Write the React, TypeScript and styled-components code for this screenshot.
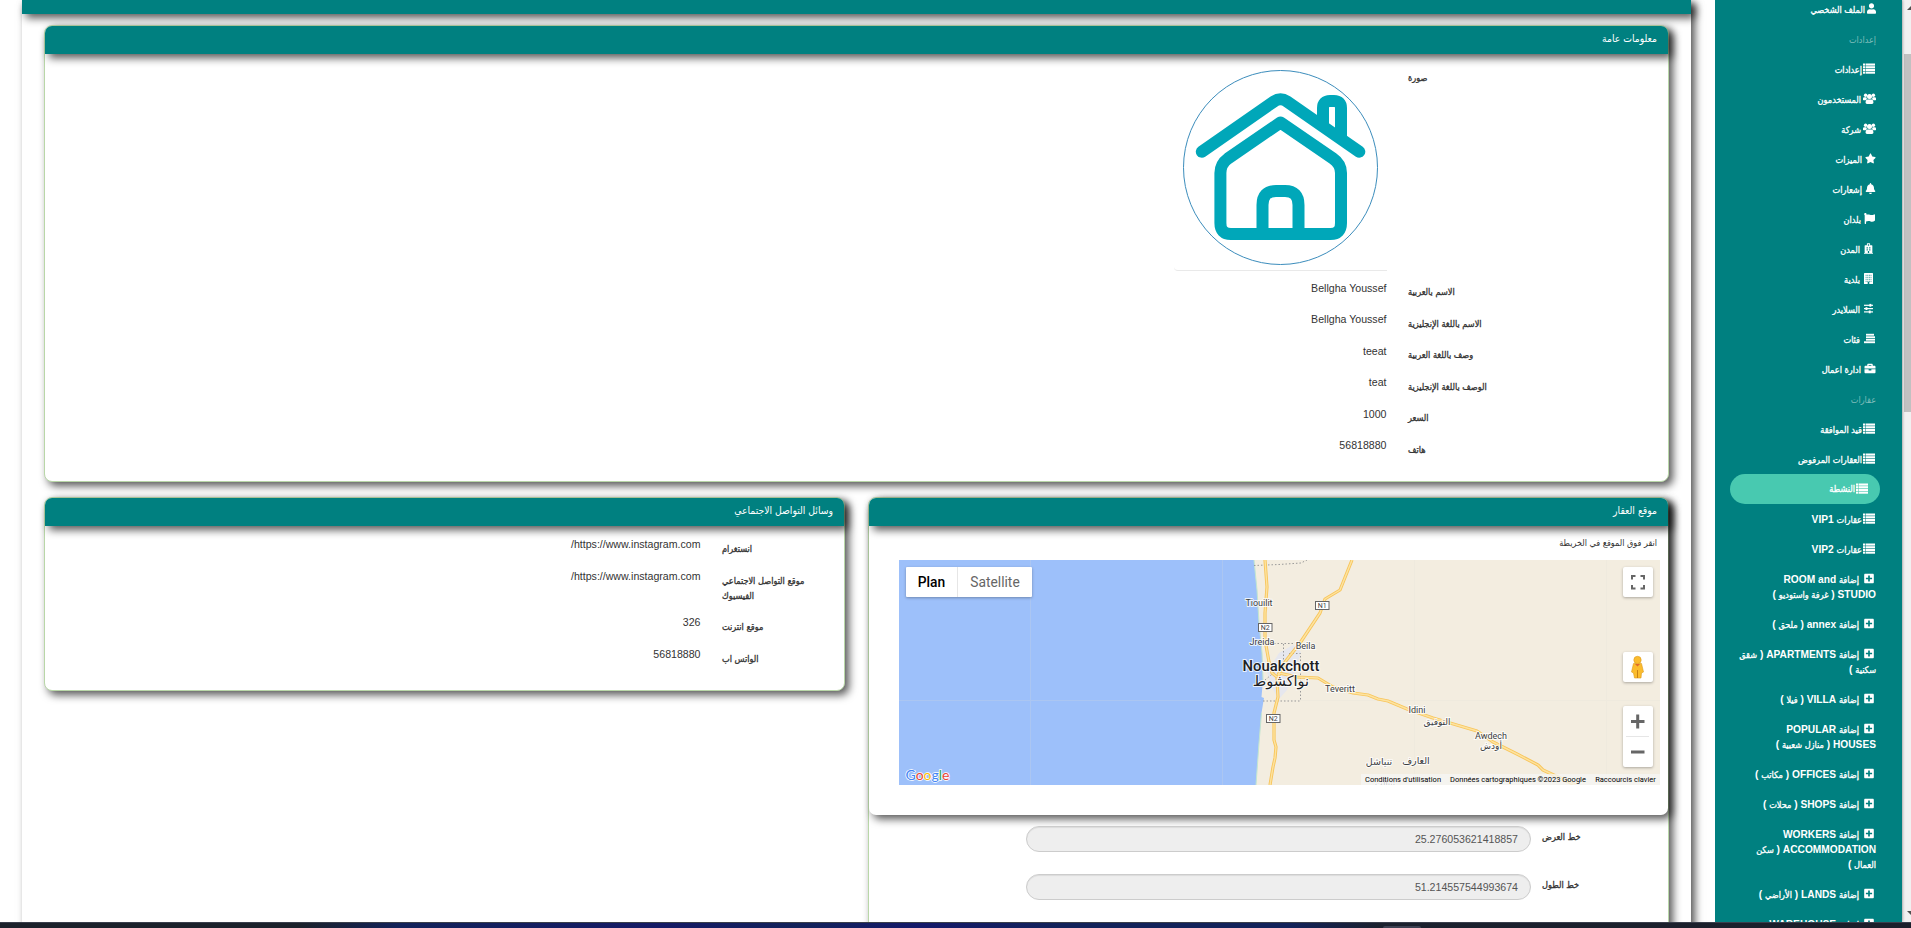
import React from "react";
import styled, { createGlobalStyle } from "styled-components";
import {
  FaUser, FaStar, FaBell, FaFlag, FaHospital, FaBriefcase, FaPlusSquare,
} from "react-icons/fa";

const Global = createGlobalStyle`
  * { box-sizing: border-box; }
  html, body { margin: 0; padding: 0; overflow: hidden; background: #fff; }
  body { font-family: "Liberation Sans", "DejaVu Sans", sans-serif; font-size: 10.6px; line-height: 15px; color: #333; }
`;

const shadow = "4px 4px 8px rgba(0,0,0,0.66)";

const Screen = styled.div`
  width: 1911px; height: 928px; overflow: hidden;
  display: flex; flex-direction: column;
`;
const Page = styled.div`
  height: 922px; display: flex; direction: rtl; overflow: hidden;
`;
const Scrollbar = styled.div`
  width: 9px; flex: none; background: #f1f1f1; padding: 6px 0 7px 0; direction: ltr;
  display: flex; flex-direction: column; align-items: flex-end;
`;
const Thumb = styled.div`
  width: 7px; height: 358px; background: #c1c1c1; margin: 44px 0 auto;
`;
const Arrow = styled.svg`
  width: 4px; height: 4px; flex: none;
`;
const Sidebar = styled.nav`
  width: 187px; flex: none; background: #008080; overflow: hidden;
  box-shadow: 0 0 3px rgba(0,0,0,0.5);
`;
const Menu = styled.ul`
  list-style: none; margin: -6px 0 0; padding: 0; font-weight: bold; font-size: 10.2px; color: #fff;
`;
/* Arabic runs: narrow face, with a thin outline where a heavier weight is wanted */
const Ar = styled.span<{ $s?: number; $bold?: boolean }>`
  font-family: "DejaVu Sans Condensed", "DejaVu Sans", sans-serif; font-stretch: condensed;
  font-weight: 400; font-size: ${(p) => p.$s ?? 9}px;
  -webkit-text-stroke: ${(p) => (p.$bold ? 0.3 : 0)}px currentColor;
`;
const MenuItem = styled.li<{ $active?: boolean; $icon?: number }>`
  padding: ${(p) => (p.$active ? "7px 12px 8px 0" : "7.5px 0")};
  margin: ${(p) => (p.$active ? "0 22px 0 15px" : "0 26px 0 0")};
  background: ${(p) => (p.$active ? "#48c9b0" : "transparent")};
  border-radius: 15px; white-space: nowrap;
  svg { width: ${(p) => p.$icon ?? 11}px; height: 11px; vertical-align: -1.5px; }
`;
const MenuLine = styled.div`
  height: 15px; line-height: 15px;
`;
const MenuHeading = styled.li`
  padding: 7.5px 26px 7.5px 0; color: #7fbdbb; height: 30px;
`;
const IconGap = styled.span<{ $before: number; $after: number }>`
  margin-right: ${(p) => p.$before}px; margin-left: ${(p) => p.$after}px;
`;

const Main = styled.main`
  flex: 1; min-width: 0; padding: 0 24px 0 22px; background: #fff;
`;
const Outer = styled.section`
  height: 1100px; background: #fff; box-shadow: ${shadow};
`;
const OuterBar = styled.div`
  height: 14px; background: #008080; box-shadow: ${shadow};
`;
const OuterBody = styled.div`
  padding: 11px 22px 0; display: flex; flex-direction: column; gap: 15px;
`;
const Panel = styled.section<{ $h: number }>`
  height: ${(p) => p.$h}px; border: 1px solid #b9d7a8; border-radius: 8px;
  background: #fff; box-shadow: ${shadow};
`;
const PanelTitle = styled.header`
  height: 28px; background: #008080; color: #fff; border-radius: 7px 7px 0 0;
  padding: 5px 11px; line-height: 15px; box-shadow: ${shadow};
`;
const Columns = styled.div`
  display: grid; grid-template-columns: 801px 801px; gap: 23px; align-items: start;
`;
const Rows = styled.dl<{ $top: number }>`
  margin: 0; padding: ${(p) => p.$top}px 0 0; display: flex; flex-direction: column;
`;
const Row = styled.div<{ $label: number; $h: number }>`
  display: grid; grid-template-columns: ${(p) => p.$label}px 1fr; column-gap: 21.500px;
  min-height: ${(p) => p.$h}px; align-items: start;
`;
const Label = styled.dt<{ $top?: number }>`
  text-align: left; white-space: nowrap; padding-top: ${(p) => p.$top ?? 4}px;
`;
const LabelLine = styled.div`
  height: 15px;
`;
const Value = styled.dd<{ $top?: number }>`
  margin: 0; text-align: right; padding-top: ${(p) => p.$top ?? 0}px;
`;
const Thumbnail = styled.div`
  width: 213px; height: 206px; padding: 5px 9px; border-bottom: 1px solid #e9e9e9; border-radius: 0 0 0 4px;
  svg { display: block; }
`;
const LocationBox = styled.div`
  height: 317px; border-radius: 7px; box-shadow: ${shadow}; background: #fff;
`;
const Hint = styled.p`
  margin: 0; padding: 9px 11px 0; height: 34px;
`;
const MapFrame = styled.div`
  position: relative; width: 761px; height: 225px; margin-right: 8px; overflow: hidden; direction: ltr;
  font-family: Roboto, sans-serif;
`;
const MapType = styled.div`
  position: absolute; left: 7px; top: 7px; height: 30px; display: flex; background: #fff;
  border-radius: 1px; box-shadow: 0 1px 3px rgba(0,0,0,0.3);
  font-size: 13.800px; line-height: 30px;
`;
const MapTypeButton = styled.span<{ $on?: boolean }>`
  width: ${(p) => (p.$on ? 52 : 74)}px; text-align: center; color: ${(p) => (p.$on ? "#000" : "#666")};
  font-weight: ${(p) => (p.$on ? 500 : 400)}; border-right: ${(p) => (p.$on ? "1px solid #e6e6e6" : "0")};
`;
const MapControl = styled.div<{ $top: number; $h: number }>`
  position: absolute; left: 724px; top: ${(p) => p.$top}px; width: 30px; height: ${(p) => p.$h}px;
  background: #fff; border-radius: 2px; box-shadow: 0 1px 3px rgba(0,0,0,0.3);
  svg { display: block; }
`;
const Attribution = styled.div`
  position: absolute; right: 0; bottom: 0; height: 11px; padding: 0 4px; display: flex; gap: 9px;
  background: rgba(245,245,245,0.75); color: #000; font-size: 7.5px; line-height: 11px; white-space: nowrap;
`;
const Credit = styled.span<{ $w: number }>`
  width: ${(p) => p.$w}px; text-align: center;
`;
const Fields = styled.div`
  padding: 11px 0 0; display: flex; flex-direction: column; gap: 22px;
`;
const Field = styled.div`
  display: grid; grid-template-columns: 126px 505px; column-gap: 11px; height: 26px;
`;
const FieldLabel = styled.label`
  text-align: left; padding-top: 3px;
`;
const Input = styled.div`
  border: 1px solid #ccc; border-radius: 13px; background: #eee; color: #555; height: 26px;
  padding: 0 12px; line-height: 25px; text-align: right; box-shadow: inset 0 1px 1px rgba(0,0,0,0.08);
`;
const Taskbar = styled.div`
  height: 6px; flex: none; direction: ltr; padding-left: 1383px;
  background: linear-gradient(90deg, #1b212b 0, #1b212b 300px, #12225a 400px, #151a66 660px, #12225a 800px, #14196a 920px, #12225a 1060px, #12225a 1290px, #1b212e 1380px, #1b1f2b 100%);
  border-top: 1px solid #3a3f4c;
`;
const TaskHint = styled.div`
  width: 38px; height: 2px; margin-top: 3px; background: #3d4152; border-radius: 2px 2px 0 0;
`;

function ListGlyph() {
  return (
    <svg viewBox="0 0 12 11" fill="currentColor">
      {[0.5, 3.2, 5.9, 8.6].map((y) => (
        <g key={y}><rect x="0" y={y} width="2.4" height="2.1" /><rect x="2.9" y={y} width="9.1" height="2.1" /></g>
      ))}
    </svg>
  );
}
function GroupGlyph() {
  return (
    <svg viewBox="0 0 13 11" fill="currentColor">
      <circle cx="2.6" cy="2.3" r="1.7" /><circle cx="10.4" cy="2.3" r="1.7" />
      <circle cx="6.5" cy="3.6" r="2.5" />
      <path d="M0 7 V5.600 Q0 4.200 1.300 4.200 H3.400 Q3.600 5.600 4.300 6.200 Q3.200 6.300 2.700 7.200 H0.600 Z" />
      <path d="M13 7 V5.600 Q13 4.200 11.700 4.200 H9.600 Q9.400 5.600 8.700 6.200 Q9.800 6.300 10.300 7.200 H12.400 Z" />
      <path d="M2.600 9.600 Q2.600 6.500 4.700 6.500 H8.300 Q10.400 6.500 10.400 9.600 Q10.400 11 9 11 H4 Q2.600 11 2.600 9.600 Z" />
    </svg>
  );
}
function TowerGlyph() {
  return (
    <svg viewBox="0 0 9 11">
      <rect width="9" height="11" rx="0.5" fill="currentColor" />
      <path d="M1.600 2.300 H7.500 M1.600 4.300 H7.500 M1.600 6.300 H7.500 M1.600 8.300 H7.500" stroke="#008080" strokeWidth="0.8" strokeDasharray="1 0.650" />
      <rect x="3.700" y="8.800" width="1.600" height="2.200" fill="#008080" />
    </svg>
  );
}
function SlidersGlyph() {
  return (
    <svg viewBox="0 0 9 11" fill="currentColor">
      <rect x="0" y="1.700" width="9" height="1.200" /><rect x="5.400" y="0.900" width="1.900" height="2.800" />
      <rect x="0" y="5" width="9" height="1.200" /><rect x="1.500" y="4.200" width="1.900" height="2.800" />
      <rect x="0" y="8.300" width="9" height="1.200" /><rect x="4.800" y="7.500" width="1.900" height="2.800" />
    </svg>
  );
}
function CategoryGlyph() {
  return (
    <svg viewBox="0 0 11 11" fill="currentColor">
      <rect x="2" y="0.800" width="8" height="1.800" /><rect x="2" y="3.300" width="9" height="1.800" />
      <rect x="2" y="5.800" width="9" height="1.800" /><rect x="0" y="8.300" width="11" height="1.900" />
    </svg>
  );
}

type Glyph = React.ComponentType;
interface Entry { icon: Glyph; lines: React.ReactNode[]; w?: number; before?: number; after?: number; active?: boolean; heading?: boolean; }

const B = ({ children }: { children: React.ReactNode }) => <Ar $bold $s={9.1}>{children}</Ar>;

const add = (first: React.ReactNode, ...rest: React.ReactNode[]): Entry => ({
  icon: FaPlusSquare, w: 10, before: 2, after: 5, lines: [<><B>إضافة</B> {first}</>, ...rest],
});
const list = (label: React.ReactNode, active?: boolean): Entry => ({
  icon: ListGlyph, w: 12, before: active ? 0 : 1, after: 1, active, lines: [label],
});

const entries: Entry[] = [
  { icon: FaUser, w: 9, before: 0, after: 2, lines: [<B>الملف الشخصي</B>] },
  { icon: FaUser, heading: true, lines: [<Ar>إعدادات</Ar>] },
  list(<B>إعدادات</B>),
  { icon: GroupGlyph, w: 13, before: 0, after: 2, lines: [<B>المستخدمون</B>] },
  { icon: GroupGlyph, w: 13, before: 0, after: 2, lines: [<B>شركة</B>] },
  { icon: FaStar, before: 0, after: 3, lines: [<B>الميزات</B>] },
  { icon: FaBell, before: 0, after: 3, lines: [<B>إشعارات</B>] },
  { icon: FaFlag, before: 1, after: 3, lines: [<B>بلدان</B>] },
  { icon: FaHospital, w: 9, before: 3, after: 4, lines: [<B>المدن</B>] },
  { icon: TowerGlyph, w: 9, before: 3, after: 4, lines: [<B>بلدية</B>] },
  { icon: SlidersGlyph, w: 9, before: 3, after: 4, lines: [<B>السلايدر</B>] },
  { icon: CategoryGlyph, before: 1, after: 4, lines: [<B>فئات</B>] },
  { icon: FaBriefcase, w: 12, before: 0, after: 3, lines: [<B>ادارة اعمال</B>] },
  { icon: FaUser, heading: true, lines: [<Ar>عقارات</Ar>] },
  list(<B>قيد الموافقة</B>),
  list(<B>العقارات المرفوض</B>),
  list(<B>النشطة</B>, true),
  list(<><B>عقارات</B> VIP1</>),
  list(<><B>عقارات</B> VIP2</>),
  add("ROOM and", <>STUDIO ( <B>غرفة واستوديو</B> )</>),
  add(<>annex ( <B>ملحق</B> )</>),
  add(<>APARTMENTS ( <B>شقق</B></>, <><B>سكنية</B> )</>),
  add(<>VILLA ( <B>فيلا</B> )</>),
  add("POPULAR", <>HOUSES ( <B>منازل شعبية</B> )</>),
  add(<>OFFICES ( <B>مكاتب</B> )</>),
  add(<>SHOPS ( <B>محلات</B> )</>),
  add("WORKERS", <>ACCOMMODATION ( <B>سكن</B></>, <><B>العمال</B> )</>),
  add(<>LANDS ( <B>الأراضي</B> )</>),
  add("WAREHOUSE"),
];

function SideMenu() {
  return (
    <Menu>
      {entries.map((e, i) => {
        if (e.heading) return <MenuHeading key={i}>{e.lines[0]}</MenuHeading>;
        const Icon = e.icon;
        return (
          <MenuItem key={i} $active={e.active} $icon={e.w}>
            {e.lines.map((l, j) => (
              <MenuLine key={j}>
                {j === 0 && <IconGap $before={e.before ?? 1} $after={e.after ?? 3}><Icon /></IconGap>}
                {l}
              </MenuLine>
            ))}
          </MenuItem>
        );
      })}
    </Menu>
  );
}

function House() {
  return (
    <svg width="195" height="195" viewBox="0 0 195 195" fill="none">
      <circle cx="97.5" cy="97.5" r="97" stroke="#3c8dbc" />
      <g stroke="#00a7b9" strokeWidth="12" strokeLinecap="butt" strokeLinejoin="round">
        <path strokeLinecap="round" d="M18.8 81.7 L91 31.5 Q97.5 27 104 31.5 L176.3 81.7" />
        <path d="M140 56 V38 Q140 31 147 31 H151 Q158 31 158 38 V70" />
        <path d="M97.5 52.5 L45 88.5 Q37.4 94 37.4 103 V153 Q37.4 164 48 164 H147.5 Q158 164 158 153 V103 Q158 94 150 88.5 Z" />
        <path d="M79.5 164 V135 Q79.5 121 93 121 H102 Q115.5 121 115.5 135 V164" />
      </g>
    </svg>
  );
}

const roads = [
  "M366 0 L368 27 L366 53 V80 L370 102 L373 113 L378 117",
  "M381 113 L378 119 L379 137 L375 153 V180 L377 187 L376 198 L374 207 L371 225",
  "M453 0 L441 30 L426 39 L421 53 L401 83 L386 102 L379 115",
  "M380 113 L398 117 L419 118 L434 127 L454 133 L469 135 L479 139 L489 141 L508 149 L534 158 L551 163 L578 171 L594 182 L618 194 L639 205 L644 210 L676 225",
];
const towns: [string, number, number, number][] = [
  ["Tiouilit", 360, 46, 9], ["Jreida", 363, 85, 9], ["Beila", 406.5, 89, 9], ["Teveritt", 441, 132, 9],
  ["Idini", 518, 153, 9], ["التوفيق", 538, 165, 9], ["Awdech", 592, 179, 9], ["أودش", 592, 189, 9],
  ["تنياشل", 480, 205, 9.5], ["العارف", 517, 204, 9.5], ["تنيالت", 486, 226, 8],
];
const signs: [string, number, number][] = [["N1", 416.5, 41.5], ["N2", 359.5, 63.5], ["N2", 367.5, 154.5]];

function MapDrawing() {
  return (
    <svg width="761" height="225" display="block" fontFamily='Roboto, "DejaVu Sans", sans-serif'>
      <rect width="761" height="225" fill="#f3ede0" />
      <path d="M0 0 H355 L358 30 L360 63 L363 93 L364 120 L362.5 137 L365 138 L362.5 153 L360 183 L357 225 H0 Z" fill="#9dc0fa" />
      <path d="M355 0 L358 30 L360 63 L363 93 L364 120" stroke="#c2e6cf" fill="none" />
      <path d="M362.5 153 L360 183 L357 225" stroke="#c2e6cf" fill="none" />
      <path d="M368 112 L380 93 L394 85 L402 92 L396 112 L388 130 L380 139 L373 128 Z" fill="#e6e7ee" />
      <path d="M131.5 0 V225 M323.5 0 V225 M0 140.5 H362" stroke="#abc6f2" />
      <path d="M515.5 0 V225 M707.5 0 V225 M370 140.5 H761" stroke="#efeade" />
      <g fill="none" stroke="#999" strokeDasharray="1.5 2" strokeWidth="1">
        <path d="M355 5.5 L380 4.5 L402 3 L408 0" />
        <path d="M375 83.5 H396 M384.5 84 V100 M390 93.5 H401.500 V141 M364 141 H401 M366 120 L377 111" />
      </g>
      <g fill="none" strokeLinejoin="round">
        {roads.map((d) => <path key={d} d={d} stroke="#f8c55a" strokeWidth="3.2" />)}
        {roads.map((d) => <path key={d} d={d} stroke="#fde3a0" strokeWidth="1.4" />)}
      </g>
      {signs.map(([t, x, y], i) => (
        <g key={i}>
          <rect x={x} y={y} width="13.500" height="8" fill="#fff" stroke="#666" />
          <text x={x + 6.8} y={y + 6.5} fontSize="7" fill="#444" textAnchor="middle">{t}</text>
        </g>
      ))}
      <g textAnchor="middle" fill="#3c4043" stroke="#fff" strokeWidth="2" paintOrder="stroke" strokeOpacity="0.8">
        {towns.map(([t, x, y, s]) => <text key={t} x={x} y={y} fontSize={s}>{t}</text>)}
        <text x="382" y="111" fontSize="14.800" fontWeight="500" fill="#202124">Nouakchott</text>
        <text x="382" y="126" fontSize="14.500" fill="#202124">نواكشوط</text>
      </g>
      <text x="6.5" y="220" fontSize="14" fontFamily="Lato, sans-serif" stroke="#fff" strokeWidth="1.5" paintOrder="stroke">
        <tspan fill="#4285f4">G</tspan><tspan fill="#ea4335">o</tspan><tspan fill="#fbbc04">o</tspan><tspan fill="#4285f4">g</tspan><tspan fill="#34a853">l</tspan><tspan fill="#ea4335">e</tspan>
      </text>
    </svg>
  );
}

function LocationMap() {
  return (
    <MapFrame>
      <MapDrawing />
      <MapType><MapTypeButton $on>Plan</MapTypeButton><MapTypeButton>Satellite</MapTypeButton></MapType>
      <MapControl $top={7} $h={30}>
        <svg width="30" height="30" fill="none" stroke="#666" strokeWidth="2">
          <path d="M9 12.500 V9 H12.500 M17.500 9 H21 V12.500 M21 18 V21.500 H17.500 M12.500 21.500 H9 V18" />
        </svg>
      </MapControl>
      <MapControl $top={92} $h={30}>
        <svg width="30" height="30">
          <path d="M10.500 11.500 H18.500 L20.500 20 L18.500 21 L18 26 H11.500 L10.500 21 L8.500 20 Z" fill="#fbbc2d" stroke="#dd9a1e" strokeWidth="0.6" />
          <path d="M14.500 18 V26" stroke="#c98214" />
          <path d="M12 12 H17 L14.500 14.500 Z" fill="#e0672a" />
          <circle cx="14.500" cy="8" r="3.700" fill="#fbbc2d" stroke="#dd9a1e" strokeWidth="0.6" />
        </svg>
      </MapControl>
      <MapControl $top={146} $h={61}>
        <svg width="30" height="61" stroke="#666" strokeWidth="3">
          <path d="M8 15.500 H21.500 M14.700 8.500 V22.500 M8 46 H21.500" />
          <path d="M3 30.500 H26" stroke="#e6e6e6" strokeWidth="1" />
        </svg>
      </MapControl>
      <Attribution>
        <Credit $w={76}>Conditions d'utilisation</Credit>
        <Credit $w={136}>Données cartographiques ©2023 Google</Credit>
        <Credit $w={61}>Raccourcis clavier</Credit>
      </Attribution>
    </MapFrame>
  );
}

const general: [string, string][] = [
  ["الاسم بالعربية", "Bellgha Youssef"],
  ["الاسم باللغة الإنجليزية", "Bellgha Youssef"],
  ["وصف باللغة العربية", "teeat"],
  ["الوصف باللغة الإنجليزية", "teat"],
  ["السعر", "1000"],
  ["هاتف", "56818880"],
];
const social: [string[], string, number][] = [
  [["انستغرام"], "https://www.instagram.com/", 32],
  [["موقع التواصل الاجتماعي", "الفيسبوك"], "https://www.instagram.com/", 46],
  [["موقع انترنت"], "326", 31.5],
  [["الواتس اب"], "56818880", 31.5],
];

export default function App() {
  return (
    <Screen>
      <Global />
      <Page>
        <Scrollbar>
          <Arrow viewBox="0 0 4 4"><path d="M4 0 V4 H0 Z" fill="#505050" /></Arrow>
          <Thumb />
          <Arrow viewBox="0 0 4 4"><path d="M0 0 H4 V4 Z" fill="#505050" /></Arrow>
        </Scrollbar>
        <Sidebar><SideMenu /></Sidebar>
        <Main>
          <Outer>
            <OuterBar />
            <OuterBody>
              <Panel $h={457}>
                <PanelTitle><Ar $s={10.3}>معلومات عامة</Ar></PanelTitle>
                <Rows $top={11}>
                  <Row $label={260} $h={215}>
                    <Label $top={5}><B>صورة</B></Label>
                    <Value><Thumbnail><House /></Thumbnail></Value>
                  </Row>
                  {general.map(([k, v]) => (
                    <Row key={k} $label={260} $h={31.5}>
                      <Label><B>{k}</B></Label>
                      <Value $top={0.5}>{v}</Value>
                    </Row>
                  ))}
                </Rows>
              </Panel>
              <Columns>
                <Panel $h={500}>
                  <LocationBox>
                    <PanelTitle><Ar $s={10.3}>موقع العقار</Ar></PanelTitle>
                    <Hint><Ar>انقر فوق الموقع في الخريطة</Ar></Hint>
                    <LocationMap />
                  </LocationBox>
                  <Fields>
                    <Field><FieldLabel><B>خط العرض</B></FieldLabel><Input>25.276053621418857</Input></Field>
                    <Field><FieldLabel><B>خط الطول</B></FieldLabel><Input>51.214557544993674</Input></Field>
                  </Fields>
                </Panel>
                <Panel $h={194}>
                  <PanelTitle><Ar $s={10.3}>وسائل التواصل الاجتماعي</Ar></PanelTitle>
                  <Rows $top={11}>
                    {social.map(([k, v, h]) => (
                      <Row key={k[0]} $label={122} $h={h}>
                        <Label>{k.map((t) => <LabelLine key={t}><B>{t}</B></LabelLine>)}</Label>
                        <Value>{v}</Value>
                      </Row>
                    ))}
                  </Rows>
                </Panel>
              </Columns>
            </OuterBody>
          </Outer>
        </Main>
      </Page>
      <Taskbar><TaskHint /></Taskbar>
    </Screen>
  );
}
